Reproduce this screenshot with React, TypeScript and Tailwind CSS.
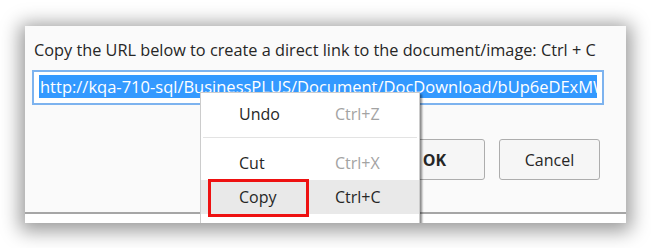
export default function App() {
  const url = "http://kqa-710-sql/BusinessPLUS/Document/DocDownload/bUp6eDExMWxqZ2F3RjZkT0lC";

  return (
    <div className="w-[651px] h-[248px] bg-white overflow-hidden pt-[26px] pl-[25px] font-['Open_Sans','Noto_Sans',sans-serif] text-[#262626]">
      {/* captured window */}
      <div className="relative w-[601px] h-[197px] overflow-hidden bg-white shadow-[0_3px_18px_5px_rgba(0,0,0,0.4)]">
        <div className="h-[188px] bg-[#fafafa] border-b-2 border-[#a6a6a6] pl-[7px] pr-[22px] pt-[14px]">
          <p className="ml-[2px] text-[16.3px] leading-[21px] whitespace-nowrap">
            Copy the URL below to create a direct link to the document/image: Ctrl + C
          </p>

          <div className="mt-[9px] h-[35px] border-2 border-[#7db3ef] bg-white px-[5px] pt-[3px] overflow-hidden">
            <div className="overflow-hidden whitespace-nowrap">
              <span className="inline-block bg-[#3399ff] text-white text-[16.5px] leading-[23px] pl-[1px]">
                {url}
              </span>
            </div>
          </div>

          <div className="mt-[34px] mr-[4px] flex justify-end gap-[14px]">
            <button className="w-[101px] h-[41px] rounded-[3px] border border-[#adadad] bg-[#f6f6f6] text-[16px] font-bold">
              OK
            </button>
            <button className="w-[101px] h-[41px] rounded-[3px] border border-[#adadad] bg-[#f6f6f6] text-[16px]">
              Cancel
            </button>
          </div>
        </div>

        {/* context menu */}
        <div className="absolute left-[175px] top-[66px] w-[220px] h-[170px] bg-white border border-[#cccccc] shadow-[2px_2px_2px_rgba(0,0,0,0.45)] pt-[4px] text-[16px]">
          <div className="h-[34px] flex items-center">
            <span className="w-[134px] pl-[38px]">Undo</span>
            <span className="text-[#a3a3a3]">Ctrl+Z</span>
          </div>
          <div className="mt-[6px] mb-[8px] mx-[2px] h-px bg-[#e3e3e3]" />
          <div className="h-[34px] flex items-center">
            <span className="w-[134px] pl-[38px]">Cut</span>
            <span className="text-[#a3a3a3]">Ctrl+X</span>
          </div>
          <div className="h-[34px] flex items-center bg-[#e9e9e9]">
            <span className="w-[134px] pl-[38px]">Copy</span>
            <span>Ctrl+C</span>
          </div>
        </div>

        {/* red highlight annotation */}
        <div className="absolute left-[183px] top-[153px] w-[101px] h-[38px] border-[3px] border-[#ee1111]" />
      </div>
    </div>
  );
}
